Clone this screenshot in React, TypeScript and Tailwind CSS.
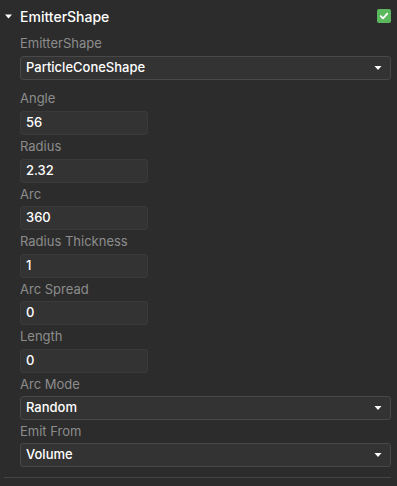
import React from "react";

const font = { fontFamily: "Inter, 'Noto Sans', sans-serif" };

function Label({ text, h = "h-[23.5px]" }: { text: string; h?: string }) {
  return (
    <div className={`${h} flex items-center text-[13px] text-[#8c8c8c]`}>{text}</div>
  );
}

function NumInput({ value }: { value: string }) {
  return (
    <div className="h-6 w-[128px] flex items-center rounded-[3px] border border-[#3a3a3a] bg-[#333333] pl-[5px] text-[13px] font-medium text-white">
      {value}
    </div>
  );
}

function Select({ value }: { value: string }) {
  return (
    <div className="h-6 w-full flex items-center justify-between rounded-[3px] border border-[#484848] bg-[#333333] pl-[5px] pr-[8px] text-[13px] font-medium text-white">
      <span>{value}</span>
      <svg width="8" height="6" viewBox="0 0 8 6">
        <path d="M0.5 1 H7.5 L4 5 Z" fill="#ffffff" />
      </svg>
    </div>
  );
}

export default function App() {
  return (
    <div className="w-[397px] h-[486px] bg-[#2c2c2c] overflow-hidden" style={font}>
      <div className="h-8 flex items-center pr-[6px]">
        <div className="w-[20px] flex justify-center pl-[1px] pr-[5px]">
          <svg width="7" height="5" viewBox="0 0 7 5">
            <path d="M0 0.5 H7 L3.5 4.5 Z" fill="#ffffff" />
          </svg>
        </div>
        <span className="flex-1 text-[14px] font-medium text-white">EmitterShape</span>
        <div className="w-[14px] h-[14px] rounded-[2px] bg-[#5cb85c] flex items-center justify-center">
          <svg width="10" height="10" viewBox="0 0 10 10">
            <path d="M1.8 5.2 L4 7.4 L8.3 2.6" stroke="#ffffff" strokeWidth="1.8" fill="none" strokeLinecap="round" strokeLinejoin="round" />
          </svg>
        </div>
      </div>
      <div className="pl-[20px] pr-[6px]">
        <Label text="EmitterShape" h="h-6" />
        <Select value="ParticleConeShape" />
        <div className="h-[7px]" />
        <Label text="Angle" h="h-6" />
        <NumInput value="56" />
        <Label text="Radius" />
        <NumInput value="2.32" />
        <Label text="Arc" />
        <NumInput value="360" />
        <Label text="Radius Thickness" />
        <NumInput value="1" />
        <Label text="Arc Spread" />
        <NumInput value="0" />
        <Label text="Length" />
        <NumInput value="0" />
        <Label text="Arc Mode" />
        <Select value="Random" />
        <Label text="Emit From" h="h-[23px]" />
        <Select value="Volume" />
      </div>
      <div className="mt-[10px] ml-[4px] mr-[6px] h-px bg-[#444444]" />
    </div>
  );
}
